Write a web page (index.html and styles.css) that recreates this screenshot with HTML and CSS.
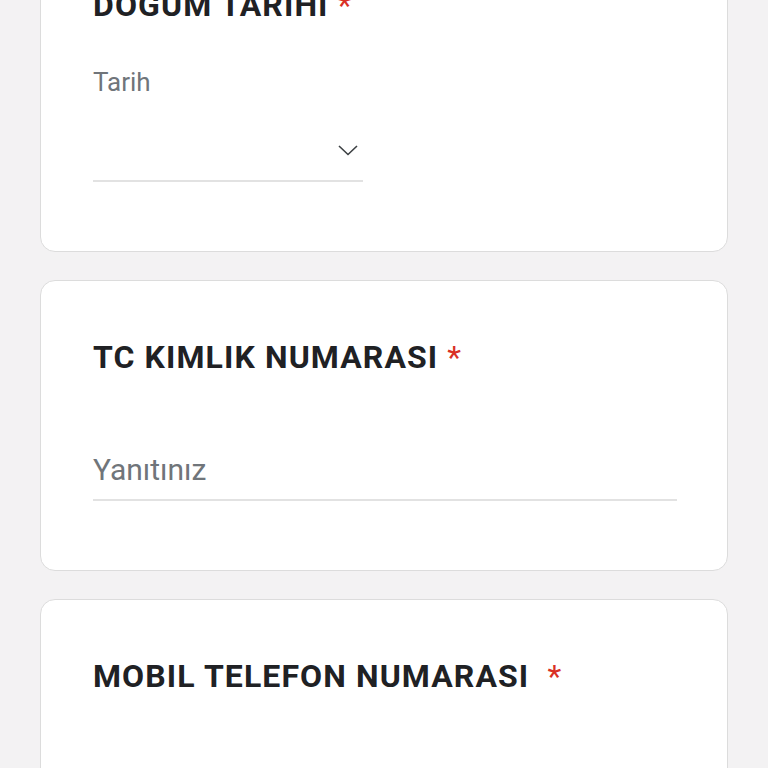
FILE: index.html
```html
<!DOCTYPE html>
<html lang="tr">
<head>
<meta charset="utf-8">
<title>Form</title>
<link rel="stylesheet" href="styles.css">
</head>
<body>
<main class="page">
  <section class="card card-first">
    <h2 class="q-title">DOGUM TARIHI <span class="req">*</span></h2>
    <div class="date-label">Tarih</div>
    <div class="date-field">
      <svg class="chevron" width="20" height="11" viewBox="0 0 20 11" aria-hidden="true">
        <path d="M1 1 L10 9.5 L19 1" fill="none" stroke="#3c4043" stroke-width="1.6"/>
      </svg>
    </div>
  </section>
  <section class="card">
    <h2 class="q-title">TC KIMLIK NUMARASI <span class="req">*</span></h2>
    <div class="text-field">Yanıtınız</div>
  </section>
  <section class="card card-last">
    <h2 class="q-title">MOBIL TELEFON NUMARASI &nbsp;<span class="req">*</span></h2>
  </section>
</main>
</body>
</html>
```

FILE: styles.css
```css
html, body {
  margin: 0;
  padding: 0;
  background: #f3f2f3;
  overflow: hidden;
}

body {
  font-family: Roboto, "Liberation Sans", Arial, sans-serif;
  color: #202124;
}

.page {
  display: flex;
  flex-direction: column;
  gap: 28px;
  padding: 0 40px;
  margin-top: -72px;
}

.card {
  background: #ffffff;
  border: 1.5px solid #dcdcdc;
  border-radius: 15px;
  padding: 56px 52px 69px 52px;
}

.card-last {
  height: 300px;
}

.q-title {
  margin: 0;
  font-size: 32px;
  line-height: 40px;
  font-weight: 700;
  letter-spacing: 1.1px;
  color: #202124;
}

.req {
  color: #d93025;
  font-weight: 400;
  letter-spacing: 0;
}

.date-label {
  margin-top: 40px;
  font-size: 26px;
  line-height: 34px;
  color: #70757a;
}

.date-field {
  box-sizing: border-box;
  width: 270px;
  height: 83px;
  border-bottom: 2px solid #e2e2e2;
  display: flex;
  justify-content: flex-end;
  align-items: flex-end;
  padding: 0 5px 24px 0;
}

.chevron {
  display: block;
}

.text-field {
  margin-top: 75px;
  font-size: 30px;
  line-height: 36px;
  color: #70757a;
  padding-bottom: 11px;
  border-bottom: 2px solid #e2e2e2;
  width: 584px;
}
```
